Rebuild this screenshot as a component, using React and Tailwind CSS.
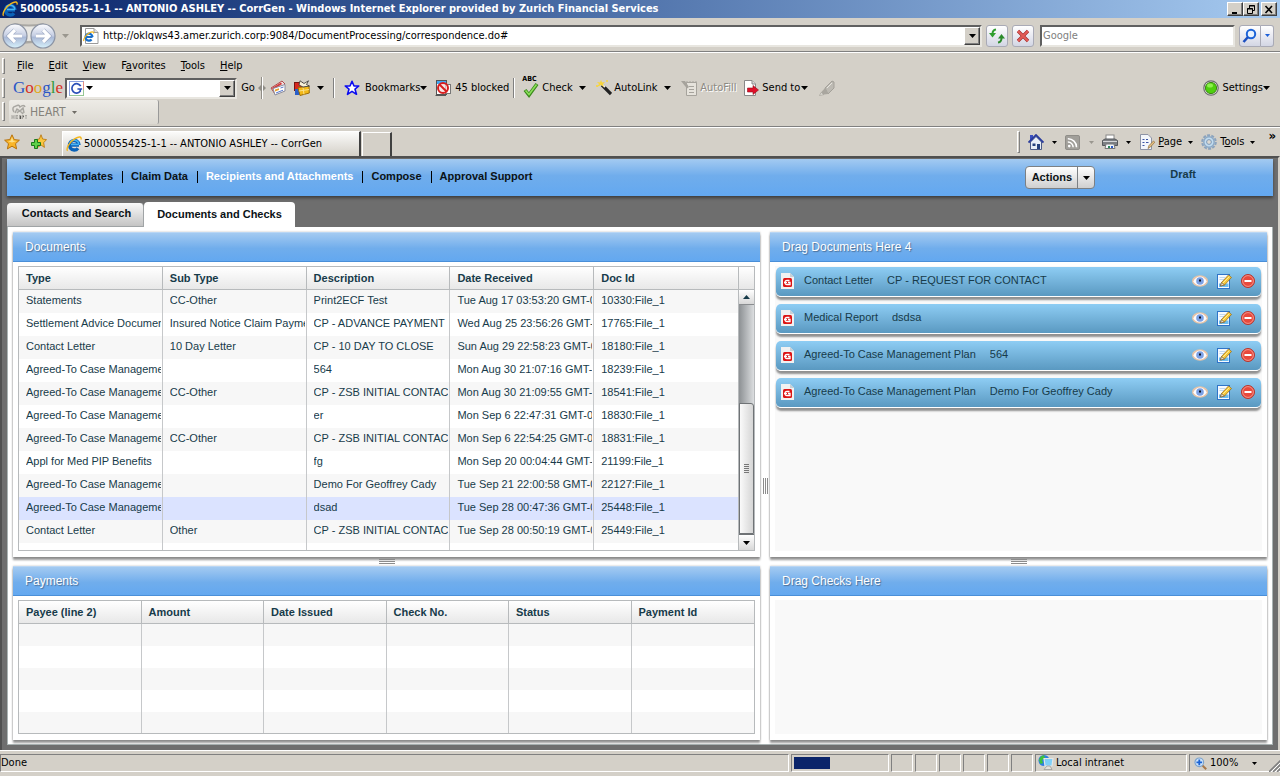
import React from 'react';
import clsx from 'clsx';

const documents = [
  ['Statements', 'CC-Other', 'Print2ECF Test', 'Tue Aug 17 03:53:20 GMT-0400', '10330:File_1'],
  ['Settlement Advice Document', 'Insured Notice Claim Payment', 'CP - ADVANCE PAYMENT', 'Wed Aug 25 23:56:26 GMT-0400', '17765:File_1'],
  ['Contact Letter', '10 Day Letter', 'CP - 10 DAY TO CLOSE', 'Sun Aug 29 22:58:23 GMT-0400', '18180:File_1'],
  ['Agreed-To Case Management Plan', '', '564', 'Mon Aug 30 21:07:16 GMT-0400', '18239:File_1'],
  ['Agreed-To Case Management Plan', 'CC-Other', 'CP - ZSB INITIAL CONTACT', 'Mon Aug 30 21:09:55 GMT-0400', '18541:File_1'],
  ['Agreed-To Case Management Plan', '', 'er', 'Mon Sep 6 22:47:31 GMT-0400', '18830:File_1'],
  ['Agreed-To Case Management Plan', 'CC-Other', 'CP - ZSB INITIAL CONTACT', 'Mon Sep 6 22:54:25 GMT-0400', '18831:File_1'],
  ['Appl for Med PIP Benefits', '', 'fg', 'Mon Sep 20 00:04:44 GMT-0400', '21199:File_1'],
  ['Agreed-To Case Management Plan', '', 'Demo For Geoffrey Cady', 'Tue Sep 21 22:00:58 GMT-0400', '22127:File_1'],
  ['Agreed-To Case Management Plan', '', 'dsad', 'Tue Sep 28 00:47:36 GMT-0400', '25448:File_1'],
  ['Contact Letter', 'Other', 'CP - ZSB INITIAL CONTACT', 'Tue Sep 28 00:50:19 GMT-0400', '25449:File_1'],
];
const SELECTED_ROW = 9;

const attachments = [
  ['Contact Letter', 'CP - REQUEST FOR CONTACT'],
  ['Medical Report', 'dsdsa'],
  ['Agreed-To Case Management Plan', '564'],
  ['Agreed-To Case Management Plan', 'Demo For Geoffrey Cady'],
];

const docColumns = ['Type', 'Sub Type', 'Description', 'Date Received', 'Doc Id'];
const payColumns = ['Payee (line 2)', 'Amount', 'Date Issued', 'Check No.', 'Status', 'Payment Id'];

/* ---------- icons ---------- */

const Svg = ({ size = 16, className, children }) => (
  <svg width={size} height={size} viewBox="0 0 16 16" className={clsx('shrink-0', className)} aria-hidden="true">
    {children}
  </svg>
);

const Caret = ({ small, className = 'text-black' }) => (
  <svg width={small ? 5 : 7} height={small ? 3 : 4} viewBox="0 0 7 4" preserveAspectRatio="none" className={clsx('shrink-0', className)} aria-hidden="true">
    <path d="M0 0H7L3.5 4Z" fill="currentColor" />
  </svg>
);

const IeIcon = ({ size }) => (
  <Svg size={size}>
    <path d="M13 9H5M13 9A4.800 4.800 0 1 0 12 12.200" fill="none" stroke="#0b62b8" strokeWidth="3.400" />
    <path d="M12.800 8.600H5M12.800 8.600A4.600 4.600 0 0 0 4 6.800" fill="none" stroke="#45b4f5" strokeWidth="1.500" />
    <path d="M1.600 14.800C-.4 12.500 4 5.500 9 2.600C13 .2 15.800.4 15 3.600" fill="none" stroke="#f3b61c" strokeWidth="1.400" />
  </Svg>
);

const PageIeIcon = () => (
  <Svg>
    <path d="M2.500 .5H11L15 4.500V15.500H2.500Z" fill="#fff" stroke="#9a9a9a" />
    <path d="M11 .5V4.500H15" fill="#ddd" stroke="#9a9a9a" />
    <path d="M9.500 9H3M9.500 9A3.500 3.500 0 1 0 8.600 11.500" fill="none" stroke="#1a6fc9" strokeWidth="2.200" />
    <path d="M.8 13C.2 11 3 6.500 7 4.500C9.500 3.300 11 4 10.500 5.500" fill="none" stroke="#f3b61c" strokeWidth="1.200" />
  </Svg>
);

const NavArrows = () => (
  <svg width="56" height="28" viewBox="0 0 56 28" className="shrink-0" aria-hidden="true">
    <defs>
      <linearGradient id="orb" x1="0" y1="0" x2="0" y2="1">
        <stop offset="0" stopColor="#fdfdff" />
        <stop offset=".5" stopColor="#c3cce2" />
        <stop offset=".55" stopColor="#a9b8d6" />
        <stop offset="1" stopColor="#d7f1fb" />
      </linearGradient>
    </defs>
    <path d="M14 1Q28 4 42 1L48 5L46 22Q28 19 12 24L4 20L5 5Z" fill="#a9a7a2" />
    <path d="M14 3Q28 6 42 3L46 8L44 20Q28 17 12 21Z" fill="#e9e8e4" />
    <circle cx="14" cy="14" r="12" fill="url(#orb)" stroke="#8b93a3" strokeWidth="1.200" />
    <circle cx="42" cy="14" r="12" fill="url(#orb)" stroke="#8b93a3" strokeWidth="1.200" />
    <path d="M21 14H9M14 8L8 14L14 20" fill="none" stroke="#9aa7c2" strokeWidth="4.500" />
    <path d="M21 14H9M14 8L8 14L14 20" fill="none" stroke="#fff" strokeWidth="3.200" />
    <path d="M35 14H47M42 8L48 14L42 20" fill="none" stroke="#9aa7c2" strokeWidth="4.500" />
    <path d="M35 14H47M42 8L48 14L42 20" fill="none" stroke="#fff" strokeWidth="3.200" />
  </svg>
);

const RefreshIcon = () => (
  <Svg>
    <path d="M7 1.500Q3.500 2 3.500 6" fill="none" stroke="#2f9e2f" strokeWidth="2" />
    <path d="M0 5H7L3.500 9.500Z" fill="#2f9e2f" />
    <path d="M9 14.500Q12.500 14 12.500 10" fill="none" stroke="#2a8a2a" strokeWidth="2" />
    <path d="M9 10.500H16L12.500 6Z" fill="#2a8a2a" />
  </Svg>
);

const StopIcon = () => (
  <Svg>
    <path d="M3 3L13 13M13 3L3 13" stroke="#a32b2b" strokeWidth="3.200" />
    <path d="M3 3L13 13M13 3L3 13" stroke="#e25b57" strokeWidth="2.200" />
  </Svg>
);

const SearchIcon = () => (
  <Svg>
    <circle cx="9" cy="6" r="4.200" fill="#e8f2ff" stroke="#1c63d8" strokeWidth="2" />
    <path d="M6 9L1.500 14" stroke="#1c4fc0" strokeWidth="2.600" />
  </Svg>
);

const GoogleG = () => (
  <Svg size={15}>
    <rect x=".5" y=".5" width="15" height="15" fill="#fff" stroke="#8fc48f" />
    <path d="M.5 15.500V.5H15.500" fill="none" stroke="#8c9ee8" />
    <path d="M15.500 .5V9" stroke="#e88" />
    <path d="M12.500 5.500A5 5 0 1 0 12 11V8.500M9 8.500H14" fill="none" stroke="#2b50b8" strokeWidth="1.800" />
  </Svg>
);

const NewsIcon = () => (
  <Svg>
    <path d="M1 8L12 1L15 4L5 14Z" fill="#f4dede" stroke="#b04a4a" />
    <path d="M2 8L11 2.500L12 4L3 10Z" fill="#d33a3a" />
    <path d="M3 8.500L15 4.500V11L5 15Z" fill="#fff" stroke="#8a8a9a" />
    <path d="M5 9.500L9 8.200V10L5 11.500Z" fill="#e8a030" />
    <path d="M6 13L13 10.200M10.500 8L13.500 7" stroke="#5577cc" />
  </Svg>
);

const GiftIcon = () => (
  <Svg>
    <rect x=".5" y="2.500" width="8" height="8" fill="#d8281e" stroke="#7a1410" />
    <rect x="1" y="9" width="9" height="6" fill="#2a5fc8" />
    <path d="M4 7.500L15 6L15.300 13L6 15.500Z" fill="#f2b818" stroke="#9a6c08" />
    <path d="M9 7.500L10 14.500M5 11L15 9.500" stroke="#fae08a" />
    <path d="M6 .8L10 3.500L14.500 .8L12.500 4.500L15.500 6L9 7L5 5Z" fill="#f7f0d8" stroke="#333" strokeWidth=".8" />
  </Svg>
);

const BlueStar = () => (
  <Svg>
    <path d="M8 1.300L10 6H14.800L11 9.200L12.500 14.300L8 11.300L3.500 14.300L5 9.200L1.200 6H6Z" fill="#fff" stroke="#0c0cf0" strokeWidth="1.600" strokeLinejoin="round" />
  </Svg>
);

const BlockedIcon = () => (
  <Svg>
    <rect x="1.500" y=".5" width="10" height="14" fill="#fff" stroke="#555" />
    <rect x="2" y="1" width="9" height="3" fill="#3fa9f5" />
    <rect x="10.500" y="4.500" width="5" height="9" fill="#fff" stroke="#777" />
    <path d="M.5 15.500H11" stroke="#555" />
    <circle cx="8" cy="8" r="5" fill="#f3dede" fillOpacity=".7" stroke="#d81e1e" strokeWidth="2" />
    <path d="M4.500 4.500L11.500 11.500" stroke="#d81e1e" strokeWidth="2" />
  </Svg>
);

const SpellIcon = () => (
  <span className="relative block h-[18px] w-4">
    <span className="absolute -left-px -top-1 text-[7px] leading-[8px] font-bold">ABC</span>
    <Svg className="mt-[3px]">
      <path d="M2 8L6 13L14 2" fill="none" stroke="#3b8a1c" strokeWidth="3.600" />
      <path d="M2.500 8.500L6 12.500L13.500 2.500" fill="none" stroke="#8be05a" strokeWidth="1.600" />
    </Svg>
  </span>
);

const WandIcon = () => (
  <Svg>
    <path d="M6 5L15 14" stroke="#222" strokeWidth="3.200" />
    <path d="M6.500 4.500L9 7" stroke="#eee" strokeWidth="2" />
    <path d="M5 0L6 2.500L9 2L7 4L8 7L5 5L1 7L3 4L1 2L4 2.500Z" fill="#f8d53a" />
    <path d="M10 1H12M11 0V2M0 6H2M1 5V7" stroke="#f8d53a" />
  </Svg>
);

const AutoFillIcon = () => (
  <Svg>
    <path d="M5.500 2.500H15.500V15.500H5.500Z" fill="#e6e3dc" stroke="#a6a39c" />
    <path d="M8 6.500H13M8 9.500H13M8 12.500H13" stroke="#a6a39c" />
    <path d="M0 1H4L8 7L6 8.500Z" fill="#a6a39c" />
    <path d="M6 1V3M9 1V3M12 1V3M15 1V3" stroke="#a6a39c" />
  </Svg>
);

const SendIcon = () => (
  <Svg>
    <path d="M1.500 .5H9L12.500 4V15.500H1.500Z" fill="#fff" stroke="#888" />
    <path d="M9 .5V4H12.500" fill="#ddd" stroke="#888" />
    <path d="M4.500 8H10V5.500L15.500 10L10 14.500V12H4.500Z" fill="#e0102a" stroke="#90101c" strokeWidth=".6" />
  </Svg>
);

const MarkerIcon = () => (
  <Svg>
    <path d="M6 8L13 1L15 2V8L9 14Z" fill="#bdbab3" stroke="#a3a099" />
    <path d="M6 8L9 14L5 14.500L2 12.500Z" fill="#a9a69f" />
    <path d="M2 12.500L5 14.500L.5 15.500Z" fill="#e8e6e0" stroke="#a3a099" strokeWidth=".7" />
    <path d="M8 8L13 3" stroke="#e8e6e0" />
  </Svg>
);

const HeartIcon = () => (
  <Svg>
    <path d="M3 8Q0 3 5 2Q8 0 9 3Q13 0 14 3M4 9L6 5L9 7L12 4L13 9M6 9Q9 5 12 10" fill="none" stroke="#a8a6a1" strokeWidth="1.500" />
    <path d="M1 11V15M3 11V15M1 13H3M5 11V15M5 11.500H7M5 13H7M5 14.500H7M8.500 15V11.500H10V15M11.500 15V11.500H13M14 11.500H16M15 11V15" stroke="#a8a6a1" />
  </Svg>
);

const starPath = 'M8 .8L10.200 5.600L15.400 6.200L11.500 9.700L12.600 14.900L8 12.200L3.400 14.900L4.500 9.700L.6 6.200L5.800 5.600Z';

const FavStar = () => (
  <Svg>
    <path d={starPath} fill="#f9b529" stroke="#b8730c" strokeLinejoin="round" />
    <path d="M8 3L9.300 6.700L12.500 7L8 8.500L4 7.200L6.700 6.700Z" fill="#fde08a" />
  </Svg>
);

const AddStar = () => (
  <Svg>
    <g transform="translate(4 0) scale(.75 .9)">
      <path d={starPath} fill="#f9c640" stroke="#b8730c" strokeLinejoin="round" />
    </g>
    <path d="M3.500 5.500H6.500V8.500H9.500V11.500H6.500V14.500H3.500V11.500H.5V8.500H3.500Z" fill="#5fd04a" stroke="#1b7a1b" />
  </Svg>
);

const HomeIcon = () => (
  <Svg>
    <rect x="2" y="1" width="3" height="6" fill="#3a4fc0" />
    <path d="M2.500 8L8 2.500L13.500 8V15.500H2.500Z" fill="#e7edf6" stroke="#4b5a86" />
    <path d="M.5 8.500L8 1L15.500 8.500" fill="none" stroke="#2a3c9c" strokeWidth="1.800" />
    <rect x="9" y="10" width="3" height="5" fill="#24407c" />
    <rect x="4.500" y="9.500" width="3" height="2.500" fill="#24407c" />
  </Svg>
);

const RssIcon = () => (
  <Svg size={15}>
    <rect x=".5" y=".5" width="15" height="15" rx="1.500" fill="#a19f9a" stroke="#8b8984" />
    <circle cx="4.500" cy="11.800" r="1.400" fill="#fff" />
    <path d="M3 7.500A5.500 5.500 0 0 1 8.700 13M3 4A9 9 0 0 1 12.300 13" fill="none" stroke="#fff" strokeWidth="1.600" />
  </Svg>
);

const PrinterIcon = () => (
  <Svg>
    <rect x="4" y="1" width="8" height="5" fill="#fff" stroke="#888" />
    <path d="M.5 6.500L3 5H13L15.500 6.500V11.500H.5Z" fill="#7d8084" stroke="#55585c" />
    <path d="M1 7.500H15" stroke="#d4d6d8" />
    <path d="M4 10H12L13 14.500H3Z" fill="#f4f8fd" stroke="#777" />
    <rect x="6" y="12" width="2" height="2" fill="#2a8a5a" />
    <rect x="9" y="12" width="2" height="2" fill="#2a5ac8" />
  </Svg>
);

const PageIcon = () => (
  <Svg>
    <path d="M1.500 .5H9L12.500 4V15.500H1.500Z" fill="#f3f6fb" stroke="#8d93a5" />
    <path d="M3.500 5.500H5.500M7 5.500H9M3.500 8.500H5.500M7 8.500H9.500M3.500 11.500H5.500" stroke="#3d55a5" strokeWidth="1.200" />
    <path d="M9 14.500L10 11.500L14.500 7L15.800 8.200L11.500 13Z" fill="#e6c083" stroke="#8a6a3a" strokeWidth=".7" />
  </Svg>
);

const GearIcon = () => (
  <Svg>
    <circle cx="8" cy="8" r="6.800" fill="none" stroke="#8ba3bd" strokeWidth="2" strokeDasharray="3 1.270" />
    <circle cx="8" cy="8" r="5.200" fill="#c2dcef" stroke="#8aa8c6" strokeWidth="1.400" />
    <circle cx="8" cy="8" r="2.400" fill="#dcd9d2" stroke="#7e9ab8" />
  </Svg>
);

const SettingsLight = () => (
  <Svg>
    <circle cx="8" cy="8" r="7.200" fill="#e8e8e4" stroke="#6d6d6d" strokeWidth="1.200" />
    <circle cx="8" cy="8" r="5.600" fill="#4fd00e" stroke="#3a8a12" />
    <ellipse cx="7" cy="5.500" rx="3" ry="2" fill="#8ff04e" />
  </Svg>
);

const IntranetIcon = () => (
  <Svg>
    <circle cx="6" cy="5.500" r="5.500" fill="#2d7fe0" />
    <path d="M1 5Q2 1 6 .3L7 3L4 5L5 8L2.500 9Z" fill="#3cc23c" />
    <path d="M6 3.500H15L14 11H7Z" fill="#7fd0f8" stroke="#e6e6e6" strokeWidth="1.200" />
    <path d="M9 11H12L14 14.500H6Z" fill="#e4e2dc" stroke="#888" strokeWidth=".6" />
  </Svg>
);

const ZoomIcon = () => (
  <Svg size={13}>
    <path d="M10 10L15 15" stroke="#a8784a" strokeWidth="2.600" />
    <circle cx="6.500" cy="6.500" r="5.300" fill="#cfe4fa" stroke="#7ba2cc" strokeWidth="1.400" />
    <path d="M6.500 3V10M3 6.500H10" stroke="#1b63d4" strokeWidth="2.200" />
  </Svg>
);

const DocIcon = () => (
  <svg width="13" height="16" viewBox="0 0 13 16" className="shrink-0" aria-hidden="true">
    <path d="M0 0H9L13 4V16H0Z" fill="#f1f1f1" />
    <path d="M9 0V4H13Z" fill="#c6d0d6" />
    <rect x="2" y="5" width="9" height="9" rx="1.500" fill="#dc1414" />
    <path d="M8.500 7.500H6A2 2 0 0 0 6 11.500H9V9.500H7" fill="none" stroke="#fff" strokeWidth="1.300" />
    <path d="M3 9.500H6" stroke="#fff" />
  </svg>
);

const EyeIcon = () => (
  <Svg>
    <ellipse cx="8" cy="8" rx="8" ry="5.800" fill="#e8c3a6" />
    <path d="M1.200 8.500Q4 3.500 8 3.500T14.800 8.500Q12 12.500 8 12.500T1.200 8.500Z" fill="#fbfcff" />
    <circle cx="8" cy="8" r="3.800" fill="#7ba1e6" />
    <rect x="7" y="6.500" width="2" height="2" fill="#10131c" />
  </Svg>
);

const EditIcon = () => (
  <Svg>
    <rect x="1.500" y="1.500" width="12" height="14" fill="#f6faff" stroke="#2f74c8" />
    <path d="M3.500 4.500H9M3.500 6.500H8" stroke="#c3d8ee" />
    <rect x="3" y="10.500" width="9.500" height="3.500" fill="#6bbdf0" />
    <path d="M4.500 13L5.500 9.500L12.500 2L15.500 4.500L8.500 12Z" fill="#f6c838" stroke="#9b6d1c" strokeWidth=".8" />
    <path d="M4.500 13L5.500 9.500L8.500 12Z" fill="#f0dcc0" stroke="#6b5030" strokeWidth=".6" />
    <path d="M7 10L13.500 3.500" stroke="#fdeb9a" />
  </Svg>
);

const RemoveIcon = () => (
  <Svg>
    <circle cx="8" cy="8" r="6.500" fill="#e8493c" stroke="#b8352c" />
    <circle cx="8" cy="8" r="5.400" fill="none" stroke="#f6a59c" strokeWidth=".8" />
    <rect x="4.500" y="7" width="7" height="2" fill="#fff" />
  </Svg>
);

/* ---------- browser chrome ---------- */

const raised =
  'flex items-center justify-center bg-[#d4d0c8] border border-t-white border-l-white border-r-[#404040] border-b-[#404040] shadow-[inset_-1px_-1px_0_#808080]';
const sunken =
  'flex items-stretch bg-white border-2 border-t-[#606060] border-l-[#606060] border-r-[#e8e6e0] border-b-[#e8e6e0]';
const glass = 'flex items-center justify-center border border-[#a9aab6] bg-linear-to-b from-white via-[#e9eaf2] to-[#d3d6e4]';

const Grip = () => <div className="w-[3px] self-stretch border border-t-white border-l-white border-r-[#808080] border-b-[#808080]" />;
const ToolSep = () => <div className="h-[20px] w-[2px] border-l border-l-[#808080] border-r border-r-white" />;
const Rule = () => <div className="h-[2px] border-t border-t-[#808080] border-b border-b-white" />;

const ToolButton = ({ icon, label, className = 'gap-1', children }) => (
  <button type="button" aria-label={label} className={clsx('flex items-center whitespace-nowrap', className)}>
    {icon}
    {children}
  </button>
);

const TitleBar = () => (
  <div className="flex h-[18px] items-center bg-linear-to-r from-[#0a246a] to-[#a6caf0] pl-[2px] pr-[3px]">
    <IeIcon size={16} />
    <h1 className="ml-[2px] flex-1 truncate text-[11px] leading-[14px] font-bold text-white">
      5000055425-1-1 -- ANTONIO ASHLEY -- CorrGen - Windows Internet Explorer provided by Zurich Financial Services
    </h1>
    <button type="button" aria-label="Minimize" className={clsx(raised, 'h-[14px] w-4')}>
      <svg width="10" height="9" viewBox="0 0 10 9"><path d="M2 8H7" stroke="#000" strokeWidth="2" /></svg>
    </button>
    <button type="button" aria-label="Restore" className={clsx(raised, 'h-[14px] w-4')}>
      <svg width="10" height="9" viewBox="0 0 10 9">
        <path d="M3.500 3V.5H8.500V5.500H6.500M3 1H9" fill="none" stroke="#000" />
        <path d="M1.500 3.500H6.500V8.500H1.500ZM1 4H7" fill="none" stroke="#000" />
      </svg>
    </button>
    <button type="button" aria-label="Close" className={clsx(raised, 'ml-[2px] h-[14px] w-4')}>
      <svg width="10" height="9" viewBox="0 0 10 9"><path d="M1.500 1L8 8M8 1L1.500 8" stroke="#000" strokeWidth="1.600" /></svg>
    </button>
  </div>
);

const AddressBar = () => (
  <div className="flex h-[33px] items-center pt-[2px] pl-[1px] pr-[6px]">
    <button type="button" aria-label="Back and forward"><NavArrows /></button>
    <Caret className="ml-[5px] text-[#9a978f]" />
    <div className={clsx(sunken, 'ml-[11px] h-[22px] flex-1')}>
      <label htmlFor="address" className="flex items-center pl-[1px]"><PageIeIcon /></label>
      <input id="address" aria-label="Address" defaultValue="http://oklqws43.amer.zurich.corp:9084/DocumentProcessing/correspondence.do#" className="min-w-0 flex-1 pl-1 outline-none" />
      <button type="button" aria-label="Show addresses" className={clsx(raised, 'w-4')}><Caret /></button>
    </div>
    <button type="button" aria-label="Refresh" className={clsx(glass, 'ml-1 size-[22px] rounded-[3px]')}><RefreshIcon /></button>
    <button type="button" aria-label="Stop" className={clsx(glass, 'ml-1 size-[22px] rounded-[3px]')}><StopIcon /></button>
    <div className={clsx(sunken, 'ml-[6px] h-[22px] w-[195px]')}>
      <input aria-label="Search" placeholder="Google" className="min-w-0 flex-1 pl-[1px] outline-none placeholder:text-[#808080]" />
    </div>
    <button type="button" aria-label="Run search" className={clsx(glass, 'ml-1 h-[22px] w-[22px] rounded-l-[3px]')}><SearchIcon /></button>
    <button type="button" aria-label="Search options" className={clsx(glass, 'h-[22px] w-[13px] rounded-r-[3px] border-l-0')}><Caret small className="text-[#1c5fd8]" /></button>
  </div>
);

const menus = [
  ['', 'F', 'ile'],
  ['', 'E', 'dit'],
  ['', 'V', 'iew'],
  ['F', 'a', 'vorites'],
  ['', 'T', 'ools'],
  ['', 'H', 'elp'],
];

const MenuBar = () => (
  <div className="flex h-6 items-center gap-3 pt-px pl-[2px]">
    <div className="flex h-4"><Grip /></div>
    <nav className="flex gap-[15px]">
      {menus.map(([before, key, after]) => (
        <button type="button" key={key + after}>{before}<u>{key}</u>{after}</button>
      ))}
    </nav>
  </div>
);

const GoogleBar = () => (
  <div className="flex h-[22px] items-center pl-[2px] pr-[10px]">
    <div className="flex h-5"><Grip /></div>
    <span className="ml-2 w-[49px] text-[17px] leading-[20px] [font-family:'Liberation_Serif',serif]">
      <span className="text-[#2a56c6]">G</span><span className="text-[#d62f24]">o</span><span className="text-[#e0a81c]">o</span><span className="text-[#2a56c6]">g</span><span className="text-[#2f9a3a]">l</span><span className="text-[#d62f24]">e</span>
    </span>
    <div className={clsx(sunken, 'ml-[3px] h-[21px] w-[172px]')}>
      <label htmlFor="gsearch" className="flex items-center gap-[2px] pl-[2px]"><GoogleG /><Caret /></label>
      <input id="gsearch" aria-label="Google search" className="min-w-0 flex-1 outline-none" />
      <button type="button" aria-label="Search history" className={clsx(raised, 'w-4')}><Caret /></button>
    </div>
    <button type="button" className="ml-1 w-[14px]">Go</button>
    <svg width="9" height="22" viewBox="0 0 9 22" className="ml-[3px] shrink-0" aria-hidden="true">
      <path d="M4.500 0V22" stroke="#fff" /><path d="M3.500 0V22" stroke="#908d86" /><path d="M0 11L3 8V14ZM8 11L5 8V14Z" fill="#908d86" />
    </svg>
    <ToolButton label="News" icon={<NewsIcon />} className="ml-[3px]" />
    <ToolButton label="Gadgets" icon={<GiftIcon />} className="ml-2 gap-[7px]"><Caret /></ToolButton>
    <div className="mx-[9px]"><ToolSep /></div>
    <ToolButton icon={<BlueStar />} className="gap-[5px]">Bookmarks</ToolButton>
    <Caret />
    <ToolButton icon={<BlockedIcon />} className="ml-2 w-[70px] gap-1">45 blocked</ToolButton>
    <div className="mx-2"><ToolSep /></div>
    <ToolButton icon={<SpellIcon />} className="w-[48px] gap-[3px]">Check</ToolButton>
    <Caret className="ml-2" />
    <ToolButton icon={<WandIcon />} className="ml-[10px] w-[60px] gap-[2px]">AutoLink</ToolButton>
    <Caret className="ml-2" />
    <ToolButton icon={<AutoFillIcon />} className="ml-[10px] w-[55px] gap-[3px] text-[#8d8a83] [text-shadow:1px_1px_0_#fff]">AutoFill</ToolButton>
    <ToolButton icon={<SendIcon />} className="ml-[7px] w-[58px] gap-[3px]">Send to</ToolButton>
    <Caret />
    <ToolButton label="Highlight" icon={<MarkerIcon />} className="ml-[11px]" />
    <ToolButton icon={<SettingsLight />} className="ml-auto gap-[3px]">Settings</ToolButton>
    <Caret />
  </div>
);

const HeartBar = () => (
  <div className="flex h-[27px] items-start gap-1 pt-[1px] pl-[2px]">
    <div className="flex h-[21px] pt-[2px]"><Grip /></div>
    <button type="button" className="flex h-6 w-[150px] items-center gap-[3px] rounded-[2px] border-r border-r-[#999] bg-linear-to-b from-[#edebe6] to-[#dcd9d2] pl-[2px] text-[12px] text-[#85827b]">
      <HeartIcon />
      HEART
      <Caret small className="ml-[3px] text-[#6f6c66]" />
    </button>
  </div>
);

const TabBar = () => (
  <div className="flex h-7 items-end pl-1 pr-1">
    <div className="flex gap-[11px] self-center">
      <ToolButton label="Favorites Center" icon={<FavStar />} />
      <ToolButton label="Add to Favorites" icon={<AddStar />} />
    </div>
    <button type="button" className="ml-[15px] flex h-[25px] w-[299px] items-center gap-[2px] border-t border-l border-r-2 border-t-white border-l-white border-r-[#404040] bg-linear-to-b from-[#fbfbfa] to-[#d4d0c8] pl-[3px]">
      <IeIcon size={16} />
      5000055425-1-1 -- ANTONIO ASHLEY -- CorrGen
    </button>
    <button type="button" aria-label="New tab" className="ml-px h-6 w-[30px] border-t border-l border-r-2 border-t-white border-l-white border-r-[#404040]" />
    <div className="ml-auto flex items-center self-center">
      <div className="flex h-[22px]"><Grip /></div>
      <ToolButton label="Home" icon={<HomeIcon />} className="ml-2 gap-2"><Caret small /></ToolButton>
      <ToolButton label="Feeds" icon={<RssIcon />} className="ml-2 gap-[9px]"><Caret small className="text-[#9a978f]" /></ToolButton>
      <ToolButton label="Print" icon={<PrinterIcon />} className="ml-2 gap-2"><Caret small /></ToolButton>
      <ToolButton icon={<PageIcon />} className="ml-2 gap-[3px]"><span><u>P</u>age</span><Caret small className="ml-[3px]" /></ToolButton>
      <ToolButton icon={<GearIcon />} className="ml-2 gap-[3px]"><span>T<u>o</u>ols</span><Caret small className="ml-[3px]" /></ToolButton>
      <button type="button" aria-label="More" className="mb-3 ml-[13px] text-[13px] leading-[10px] font-bold">»</button>
    </div>
  </div>
);

const cell = 'h-[18px] border border-t-[#808080] border-l-[#808080] border-r-white border-b-white';

const StatusBar = () => (
  <footer className="flex h-[26px] items-start gap-[2px] border-t border-t-white pt-[3px]">
    <div className={clsx(cell, 'flex flex-1 items-center')}>Done</div>
    <div className={clsx(cell, 'flex w-[98px] items-center pl-[2px]')}><div className="h-[12px] w-[36px] bg-[#0a246a]" /></div>
    {[0, 1, 2, 3, 4, 5].map((i) => <div key={i} className={clsx(cell, 'w-[22px]')} />)}
    <div className={clsx(cell, 'flex w-[152px] items-center gap-[2px] pl-[2px]')}><IntranetIcon />Local intranet</div>
    <div className={clsx(cell, 'relative flex w-[91px] items-center gap-[3px] border-r-0 pl-[4px]')}>
      <ZoomIcon />
      100%
      <Caret small className="ml-[11px]" />
      <svg width="12" height="12" viewBox="0 0 12 12" className="absolute -right-px -bottom-px" aria-hidden="true">
        <path d="M0 12L12 0M4 12L12 4M8 12L12 8" stroke="#808080" strokeWidth="1.600" />
        <path d="M2 12L12 2M6 12L12 6M10 12L12 10" stroke="#fff" />
      </svg>
    </div>
  </footer>
);

/* ---------- application ---------- */

const navItems = ['Select Templates', 'Claim Data', 'Recipients and Attachments', 'Compose', 'Approval Support'];

const AppNav = () => (
  <header className="flex h-[37px] items-center bg-linear-to-b from-[#a3caf1] via-[#70adec] via-45% to-[#63a8f0] pl-[17px] shadow-[0_2px_3px_rgba(0,0,0,0.45)]">
    <nav className="flex items-center pb-[3px] font-bold">
      {navItems.map((item, i) => (
        <React.Fragment key={item}>
          {i > 0 && <span className="mt-[2px] mr-2 ml-[9px] h-3 w-px bg-black" />}
          <a href="#" className={item === 'Recipients and Attachments' ? 'text-white' : 'text-[#0b1216]'}>{item}</a>
        </React.Fragment>
      ))}
    </nav>
    <div className="ml-auto flex h-[23px] rounded-[4px] border border-[#7c8084] bg-linear-to-b from-white to-[#cfcfcf] font-bold text-[#0b1216]">
      <button type="button" className="w-[52px] border-r border-r-[#7c8084] pb-[2px]">Actions</button>
      <button type="button" aria-label="Open actions" className="flex w-4 items-center justify-center"><Caret /></button>
    </div>
    <span className="mr-[77px] ml-[75px] pb-[7px] font-bold text-[#173b4a]">Draft</span>
  </header>
);

const Panel = ({ title, children }) => (
  <section className="flex min-w-0 flex-col bg-white shadow-[0_0_2px_rgba(0,0,0,0.25),0_3px_2px_0px_rgba(0,0,0,0.4)]">
    <h2 className="h-[30px] border-t border-b border-t-[#b9d6f4] border-b-[#4a8fd8] bg-linear-to-b from-[#a3caf1] via-[#70adec] via-55% to-[#63a8f0] pl-3 text-[12px] leading-[28px] text-white [text-shadow:1px_1px_1px_#4b6f96]">
      {title}
    </h2>
    <div className="flex flex-1 flex-col px-[5px] pt-1 pb-[6px]">{children}</div>
  </section>
);

const HeadRow = ({ columns }) => (
  <thead>
    <tr className="h-[23px] bg-linear-to-b from-white to-[#e7e7e7]">
      {columns.map((name) => (
        <th key={name} className="border-r border-b border-[#b7babc] pb-px pl-[7px] text-left font-bold text-[#173b4a] last:border-r-0">{name}</th>
      ))}
    </tr>
  </thead>
);

const DocumentsTable = () => (
  <div className="flex border border-[#b7babc]">
    <div className="min-w-0 flex-1">
      <table className="w-full table-fixed border-separate border-spacing-0">
        <HeadRow columns={docColumns} />
        <tbody>
          {documents.map((row, i) => (
            <tr key={row[4]} className={clsx('h-[23px]', i === SELECTED_ROW ? 'bg-[#dbe3ff]' : i % 2 === 0 && 'bg-[#f7f7f7]')}>
              {row.map((value, c) => (
                <td key={docColumns[c]} className="border-r border-[#c6c8ca] pr-px pb-[3px] pl-[7px] last:border-r-0">
                  <div className="overflow-hidden whitespace-nowrap">{value}</div>
                </td>
              ))}
            </tr>
          ))}
          <tr className="h-[7px]">
            {docColumns.map((name) => <td key={name} className="border-r border-[#c6c8ca] last:border-r-0" />)}
          </tr>
        </tbody>
      </table>
    </div>
    {/* scroll bar */}
    <div className="flex w-4 shrink-0 flex-col border-l border-l-[#b7babc]">
      <div className="h-[23px] border-b border-b-[#b7babc] bg-linear-to-b from-white to-[#e7e7e7]" />
      <button type="button" aria-label="Scroll up" className="flex h-[15px] items-center justify-center border-b border-b-[#8a8d90] bg-linear-to-b from-white to-[#d8d8d8]"><Caret className="rotate-180" /></button>
      <div className="flex flex-1 flex-col justify-end bg-linear-to-r from-[#8d9194] to-[#dcdee0]">
        <div className="flex h-[131px] flex-col items-center justify-center gap-px rounded-tr-[3px] border border-[#6f7376] bg-linear-to-r from-[#fafafa] to-[#d6d6d6]">
          {[0, 1, 2, 3, 4].map((n) => <span key={n} className="h-px w-[5px] bg-[#777]" />)}
        </div>
      </div>
      <button type="button" aria-label="Scroll down" className="flex h-4 items-center justify-center border-t border-t-[#6f7376] bg-linear-to-b from-white to-[#d8d8d8]"><Caret /></button>
    </div>
  </div>
);

const PaymentsTable = () => (
  <div className="border border-[#b7babc]">
    <table className="w-full table-fixed border-separate border-spacing-0">
      <HeadRow columns={payColumns} />
      <tbody>
        {[0, 1, 2, 3, 4].map((r) => (
          <tr key={r} className={clsx(r === 4 ? 'h-[21px]' : 'h-[22px]', r % 2 === 0 && 'bg-[#f7f7f7]')}>
            {payColumns.map((name) => <td key={name} className="border-r border-[#c6c8ca] last:border-r-0" />)}
          </tr>
        ))}
      </tbody>
    </table>
  </div>
);

const Attachment = ({ type, name }) => (
  <li className="flex h-[30px] items-center rounded-[5px] border-b border-b-white bg-linear-to-b from-[#8ecdf4] to-[#5a99c1] px-[5px] pb-px text-[#173b4a] shadow-[0_3px_2px_rgba(0,0,0,0.42)]">
    <DocIcon />
    <span className="ml-[10px] pb-[2px]">{type}</span>
    <span className="ml-[14px] flex-1 truncate pb-[2px]">{name}</span>
    <div className="flex gap-2">
      <button type="button" aria-label={`View ${name}`}><EyeIcon /></button>
      <button type="button" aria-label={`Edit ${name}`}><EditIcon /></button>
      <button type="button" aria-label={`Remove ${name}`}><RemoveIcon /></button>
    </div>
  </li>
);

const RowGrip = () => (
  <div className="flex h-[9px] items-center justify-center">
    <div className="flex w-4 flex-col gap-px">
      {[0, 1, 2].map((n) => <span key={n} className="h-px bg-[#8c8c8c]" />)}
    </div>
  </div>
);

const ColumnGrip = () => (
  <div className="flex items-center justify-center">
    <div className="flex h-4 gap-px">
      {[0, 1, 2].map((n) => <span key={n} className="w-px bg-[#8c8c8c]" />)}
    </div>
  </div>
);

export default function App() {
  return (
    <div className="flex min-h-screen flex-col bg-[#d4d0c8] text-[11px] leading-[14px] text-black [font-family:'DejaVu_Sans_Condensed',Tahoma,sans-serif]">
      <TitleBar />
      <AddressBar />
      <Rule />
      <MenuBar />
      <GoogleBar />
      <HeartBar />
      <Rule />
      <TabBar />

      <main className="flex-1 border-t-2 border-r-2 border-l-2 border-t-[#505050] border-r-[#d4d0c8] border-l-[#505050] bg-[#6e6e6e] px-[5px] pt-px pb-[5px] text-[#173b4a] [font-family:'Liberation_Sans',Arial,sans-serif]">
        <AppNav />
        <div className="mt-[6px] flex items-end font-bold text-[#0b1216]">
          <button type="button" className="h-6 w-[137px] rounded-t-[4px] border-r border-b border-[#a0a4a6] bg-linear-to-b from-[#fafafa] to-[#c4c4c4] pb-1 pl-[3px]">Contacts and Search</button>
          <button type="button" className="h-[25px] w-[151px] rounded-t-[4px] bg-white pb-[1px]">Documents and Checks</button>
        </div>
        <div className="grid grid-cols-[747fr_10px_497fr] border border-t-0 border-[#aab3b3] bg-white px-[5px] pt-[5px] pb-1">
          <div className="grid min-w-0">
            <Panel title="Documents"><DocumentsTable /></Panel>
            <RowGrip />
            <Panel title="Payments"><PaymentsTable /></Panel>
          </div>
          <ColumnGrip />
          <div className="grid min-w-0 grid-rows-[325px_9px_1fr]">
            <Panel title="Drag Documents Here 4">
              <ul className="flex flex-1 flex-col gap-[7px] bg-[#f9f9f9] px-px pt-px">
                {attachments.map(([type, name]) => <Attachment key={type + name} type={type} name={name} />)}
              </ul>
            </Panel>
            <RowGrip />
            <Panel title="Drag Checks Here">
              <div className="flex-1 bg-[#f9f9f9]" />
            </Panel>
          </div>
        </div>
      </main>

      <StatusBar />
    </div>
  );
}
